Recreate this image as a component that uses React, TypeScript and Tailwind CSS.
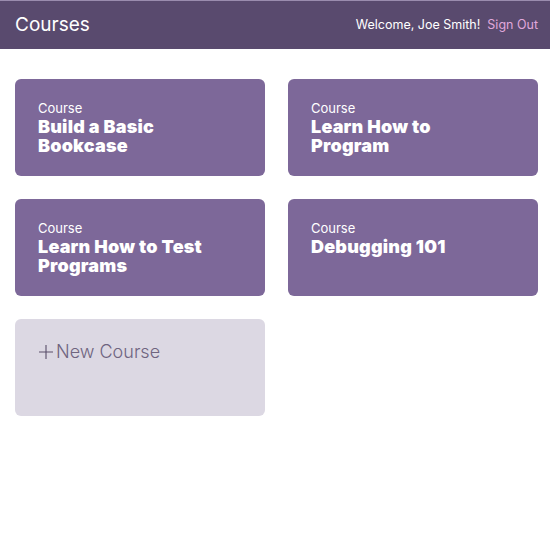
import React from "react";

const courses = [
  "Build a Basic Bookcase",
  "Learn How to Program",
  "Learn How to Test Programs",
  "Debugging 101",
];

export default function App() {
  return (
    <div className="min-h-[550px] bg-white" style={{ fontFamily: 'Inter, "Open Sans", "Liberation Sans", sans-serif' }}>
      <header className="h-[49px] bg-[#594a6e] border-t border-[#9a8cae] flex items-center justify-between pl-[15px] pr-[12px]">
        <h1 className="text-[19px] text-white">Courses</h1>
        <div className="flex items-center gap-[7px] text-[12.5px]">
          <span className="text-white">Welcome, Joe Smith!</span>
          <a className="text-[#e0a8dc]">Sign Out</a>
        </div>
      </header>
      <main className="grid grid-cols-2 gap-x-[23px] gap-y-[23px] px-[15px] pt-[30px] pr-[12px]">
        {courses.map((c) => (
          <div key={c} className="h-[97px] rounded-[6px] bg-[#7d6899] px-[23px] pt-[21px]">
            <div className="text-[13px] text-white leading-[17px]">Course</div>
            <div className="text-[18px] font-black text-white leading-[19px] tracking-[0.2px] w-[185px]">{c}</div>
          </div>
        ))}
        <div className="h-[97px] rounded-[6px] bg-[#dcd8e3] px-[22px] pt-[19px]">
          <div className="flex items-center text-[18px] font-light text-[#6f6480]">
            <svg width="18" height="18" viewBox="0 0 18 18" className="mr-[1px]">
              <path d="M9 2v14M2 9h14" stroke="#5a4e6a" strokeWidth="1.1" />
            </svg>
            <span>New Course</span>
          </div>
        </div>
      </main>
    </div>
  );
}
